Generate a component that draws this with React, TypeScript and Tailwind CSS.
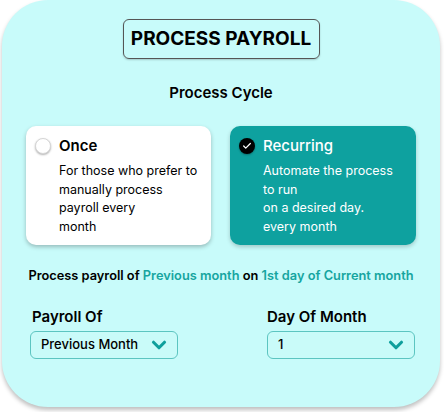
import { ChevronDown, Check } from "lucide-react";

const font = { fontFamily: "Inter, 'Noto Sans', sans-serif" };

function SelectBox({ value }: { value: string }) {
  return (
    <div className="flex items-center justify-between w-[148px] h-[28px] pl-[10px] pr-[7px] rounded-[6px] border border-[#5cc5c1] bg-[#c9fbf9]">
      <span className="text-[13px] font-medium text-black">{value}</span>
      <ChevronDown className="w-[22px] h-[22px] text-[#0e9f9c]" strokeWidth={3.4} />
    </div>
  );
}

export default function App() {
  return (
    <div className="w-[444px] h-[412px] bg-white" style={font}>
      <div className="ml-[2px] w-[438px] h-[407px] rounded-[46px] bg-[#c8fbfa] shadow-[0_3px_4px_rgba(0,0,0,0.25)] flex flex-col items-center">
        {/* Title */}
        <div className="mt-[19px] w-[197px] h-[40px] flex items-center justify-center rounded-[6px] border border-[#555] shadow-[0_1px_2px_rgba(0,0,0,0.2)]">
          <span className="text-[19px] font-bold text-black">PROCESS PAYROLL</span>
        </div>

        <div className="mt-[23px] text-[15px] font-semibold text-black">Process Cycle</div>

        {/* Cycle cards */}
        <div className="mt-[21px] flex gap-[19px]">
          <div className="w-[185px] h-[119px] rounded-[10px] bg-white shadow-[0_2px_4px_rgba(0,0,0,0.25)] pl-[9px] pt-[9px]">
            <div className="flex items-center gap-[8px]">
              <span className="w-[16px] h-[16px] rounded-full bg-white border border-[#d6d6d6] shadow-[0_1px_2px_rgba(0,0,0,0.3)]" />
              <span className="text-[15px] font-semibold text-black">Once</span>
            </div>
            <p className="mt-[5px] pl-[24px] text-[12.5px] leading-[18.5px] text-black">
              For those who prefer to
              <br />
              manually process
              <br />
              payroll every
              <br />
              month
            </p>
          </div>
          <div className="w-[186px] h-[119px] rounded-[10px] bg-[#0ea19f] shadow-[0_2px_4px_rgba(0,0,0,0.2)] pl-[9px] pt-[9px]">
            <div className="flex items-center gap-[8px]">
              <span className="w-[16px] h-[16px] rounded-full bg-black flex items-center justify-center shadow-[0_1px_2px_rgba(0,0,0,0.3)]">
                <Check className="w-[10px] h-[10px] text-white" strokeWidth={3} />
              </span>
              <span className="text-[15px] font-medium text-white">Recurring</span>
            </div>
            <p className="mt-[5px] pl-[24px] text-[12.5px] leading-[18.5px] text-white">
              Automate the process
              <br />
              to run
              <br />
              on a desired day.
              <br />
              every month
            </p>
          </div>
        </div>

        {/* Summary */}
        <div className="mt-[21px] text-[12.8px] font-semibold text-black">
          Process payroll of <span className="text-[#16a5a0]">Previous month</span> on{" "}
          <span className="text-[#16a5a0]">1st day of Current month</span>
        </div>

        {/* Selects */}
        <div className="mt-[21px] w-full pl-[28px] pr-[25px] flex justify-between">
          <div className="flex flex-col">
            <span className="pl-[2px] text-[15px] font-semibold text-black">Payroll Of</span>
            <div className="mt-[3px]">
              <SelectBox value="Previous Month" />
            </div>
          </div>
          <div className="flex flex-col">
            <span className="text-[15px] font-semibold text-black">Day Of Month</span>
            <div className="mt-[3px]">
              <SelectBox value="1" />
            </div>
          </div>
        </div>
      </div>
    </div>
  );
}
